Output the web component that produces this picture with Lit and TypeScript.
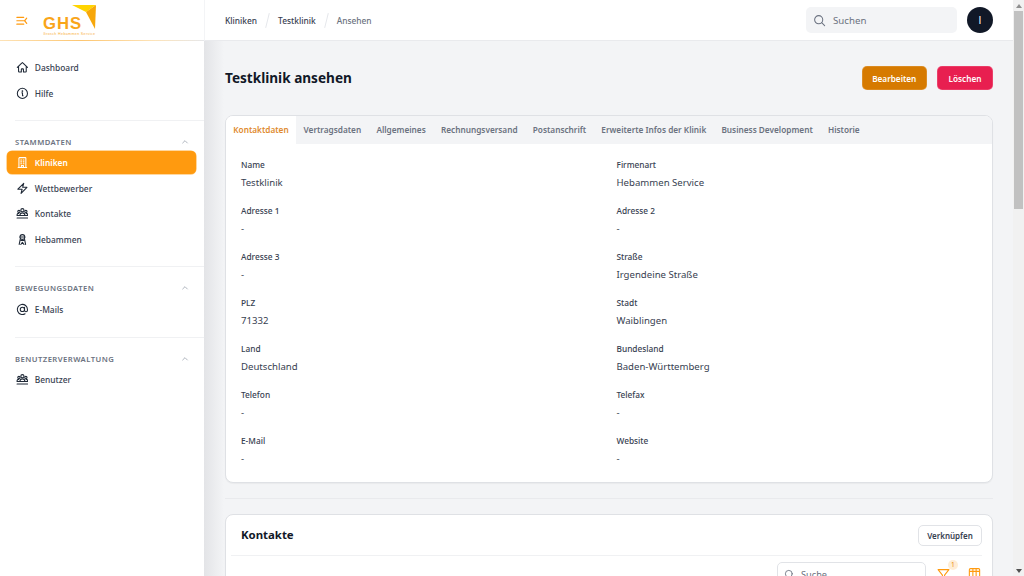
import { LitElement, html, css, svg } from "lit";
import { customElement } from "lit/decorators.js";

const ic = (p: unknown) => html`<svg class="ic" viewBox="0 0 24 24" fill="none" stroke="currentColor" stroke-width="2" stroke-linecap="round" stroke-linejoin="round">${p}</svg>`;
const icons: Record<string, unknown> = {
  home: svg`<path d="M2.5 12 11.2 3.3a1.1 1.1 0 0 1 1.6 0L21.5 12M4.8 9.8v9.9c0 .6.5 1.1 1.1 1.1h4.1v-4.9c0-.6.5-1.1 1.1-1.1h1.8c.6 0 1.1.5 1.1 1.1v4.9h4.1c.6 0 1.1-.5 1.1-1.1V9.8"/>`,
  info: svg`<circle cx="12" cy="12" r="9.5"/><path d="M11 11h1.2v5.5H13.3"/><circle cx="12" cy="7.7" r=".6" fill="currentColor"/>`,
  building: svg`<path d="M4 21.5h16M5.5 21.5V4.2c0-.7.6-1.2 1.2-1.2h10.6c.7 0 1.2.5 1.2 1.2v17.3M9 7.5h1.5M13.5 7.5H15M9 11h1.5M13.5 11H15M9 14.5h1.5M13.5 14.5H15M10 21.5v-3.5h4v3.5"/>`,
  bolt: svg`<path d="M3.5 13.5 14.5 2.5 12.5 10h8L9.5 21.5l2-8z"/>`,
  group: svg`<circle cx="12" cy="6" r="3"/><circle cx="5.5" cy="8.5" r="2.2"/><circle cx="18.5" cy="8.5" r="2.2"/><path d="M7.5 15c0-2.5 2-4 4.5-4s4.5 1.5 4.5 4v1M2 16v-1.5c0-1.5 1.3-2.5 3-2.5M22 16v-1.5c0-1.5-1.3-2.5-3-2.5M2 20.5h20M2 16h20"/>`,
  person: svg`<circle cx="12" cy="7.5" r="4.5"/><path d="M7.5 7.5h9M8 11.5 6 21.5M16 11.5l2 10M9 21.5l3-4 3 4M9.5 14h5"/>`,
  at: svg`<circle cx="12" cy="12" r="4"/><path d="M16 8v5.5a2.7 2.7 0 0 0 5.5 0V12A9.5 9.5 0 1 0 17 20.2"/>`,
};

const nav = (icon: string, label: string, active = false) => html`
  <a class="item ${active ? "active" : ""}">${ic(icons[icon])}<span>${label}</span></a>`;

const group = (title: string, items: unknown) => html`
  <div class="group">
    <div class="gh"><span>${title}</span>
      <svg class="chev" viewBox="0 0 24 24" fill="none" stroke="currentColor" stroke-width="2.4" stroke-linecap="round" stroke-linejoin="round"><path d="m5 15 7-7 7 7"/></svg>
    </div>
    <div class="items">${items}</div>
  </div>`;

const fields: [string, string][] = [
  ["Name", "Testklinik"], ["Firmenart", "Hebammen Service"],
  ["Adresse 1", "-"], ["Adresse 2", "-"],
  ["Adresse 3", "-"], ["Straße", "Irgendeine Straße"],
  ["PLZ", "71332"], ["Stadt", "Waiblingen"],
  ["Land", "Deutschland"], ["Bundesland", "Baden-Württemberg"],
  ["Telefon", "-"], ["Telefax", "-"],
  ["E-Mail", "-"], ["Website", "-"],
];
const tabs = ["Kontaktdaten", "Vertragsdaten", "Allgemeines", "Rechnungsversand", "Postanschrift", "Erweiterte Infos der Klinik", "Business Development", "Historie"];

@customElement("app-root")
export class AppRoot extends LitElement {
  static styles = css`
    :host { display: flex; width: 1024px; height: 576px; overflow: hidden; font-family: "Noto Sans", sans-serif; font-size: 8.4px; color: #374151; background: #f3f4f6; }
    * { box-sizing: border-box; }
    .ic { width: 12.8px; height: 12.8px; flex: none; }

    .sidebar { width: 204px; flex: none; background: #fff; display: flex; flex-direction: column; }
    .brand { height: 41px; flex: none; display: flex; align-items: flex-start; padding: 5px 0 0 16px; border-bottom: 1px solid transparent; border-image: linear-gradient(to right, #fde3b8 0, #fdc671 40%, #fde3b8 75%, #e5e7eb 100%) 1; }
    .burger { width: 12px; height: 9.5px; margin: 11px 0 0 0; flex: none; }
    .logo { width: 54px; height: 31px; margin: 0 0 0 15px; flex: none; }
    nav { display: flex; flex-direction: column; padding: 15px 8px 0 7px; }
    .items { display: flex; flex-direction: column; gap: 2.56px; }
    .item { height: 23.04px; display: flex; align-items: center; gap: 6.5px; padding: 0 8.5px; border-radius: 5px; font-weight: 500; color: #374151; }
    .item.active { background: #ff9a0f; color: #fff; font-weight: 600; box-shadow: 0 0 0 .5px #ffb040; }
    .item .ic { color: #1f2937; }
    .item.active .ic { color: #fff; }
    .group { display: flex; flex-direction: column; border-top: 1px solid #f0f1f3; margin: 15px -8px 0 8px; padding: 14px 8px 15.6px 0; }
    .group .items { margin-left: -8px; }
    .group:last-child { padding-bottom: 0; }
    .gh { height: 14px; display: flex; align-items: center; justify-content: space-between; padding-right: 7px; color: #6b7280; font-size: 7.68px; font-weight: 600; letter-spacing: .45px; margin-bottom: 2.5px; }
    .chev { width: 8px; height: 8px; color: #9ca3af; }
    .group + .group { margin-top: 0; }

    .main { flex: 1; min-width: 0; display: flex; flex-direction: column; }
    .top { height: 41px; flex: none; background: #fff; border-bottom: 1px solid #e9eaed; border-left: 1px solid #f3f4f6; display: flex; align-items: center; padding: 0 20px 0 20px; }
    .crumbs { display: flex; align-items: center; font-weight: 500; color: #374151; flex: 1; }
    .crumbs .sl { width: 1px; height: 15px; background: #e5e7eb; transform: rotate(14deg); margin: 0 10px; }
    .crumbs .last { color: #6b7280; }
    .search { width: 151px; height: 25.6px; background: #f3f4f6; border-radius: 5px; display: flex; align-items: center; gap: 7px; padding: 0 7px; color: #6b7280; font-size: 9.7px; }
    .search svg { width: 13px; height: 13px; color: #6b7280; flex: none; }
    .avatar { width: 26px; height: 26px; border-radius: 50%; background: #111827; color: #fff; display: flex; align-items: center; justify-content: center; margin-left: 10px; font-family: "Liberation Sans", sans-serif; font-size: 10.24px; }

    .content { flex: 1; min-height: 0; overflow: hidden; padding: 25px 20px 0 21px; background: linear-gradient(to right, #e3e4e7, #f3f4f6 20px); }
    .head { display: flex; align-items: center; height: 24px; }
    h1 { flex: 1; margin: 0 0 1px; font-size: 13.6px; font-weight: 700; color: #111827; }
    .btn { height: 24px; border-radius: 5px; display: flex; align-items: center; justify-content: center; font-size: 8.2px; font-weight: 600; color: #fff; box-shadow: inset 0 0 0 .6px rgba(255,255,255,.25); }
    .b1 { width: 65.5px; background: #d67a00; }
    .b2 { width: 56px; background: #e81f50; margin-left: 10px; }

    .card { background: #fff; border: 1px solid #dfe1e5; border-radius: 8px; overflow: hidden; box-shadow: 0 1px 1px rgba(0,0,0,.04); }
    .tabcard { margin-top: 25px; height: 368px; }
    .tabs { display: flex; height: 28px; background: #f3f4f6; padding-right: 0; }
    .tab { display: flex; align-items: center; padding: 0 7.6px 1.5px; font-size: 8.24px; font-weight: 600; color: #6b7280; }
    .tab.on { background: #fff; color: #e08a2e; width: 70px; padding: 0 0 1.5px; justify-content: center; }
    .grid { display: grid; grid-template-columns: 375.5px 1fr; row-gap: 0; padding: 12px 15px 0 15px; }
    .f { height: 46.08px; display: flex; flex-direction: column; }
    .f label { font-size: 8.3px; font-weight: 500; color: #374151; line-height: 18px; height: 17px; }
    .f div { font-size: 9.6px; color: #374151; line-height: 20px; }

    .hr { height: 1px; background: #e9eaed; margin: 15px 0; }
    .c2 { height: 100px; }
    .c2h { height: 41px; margin: 0 10px 0 5px; border-bottom: 1px solid #f0f1f3; display: flex; align-items: center; justify-content: space-between; padding-left: 10px; }
    .c2h b { font-size: 11.4px; font-weight: 700; color: #111827; margin-bottom: 1.5px; }
    .link { width: 64px; height: 21px; border: 1px solid #e1e3e7; border-radius: 5px; display: flex; align-items: center; justify-content: center; font-size: 8px; font-weight: 600; color: #374151; }
    .tools { display: flex; align-items: flex-start; justify-content: flex-end; padding: 6px 10px 0 0; gap: 0; position: relative; }
    .fs { width: 149px; height: 24px; border: 1px solid #e1e3e7; border-radius: 5px; display: flex; align-items: center; gap: 6px; padding: 0 6px; color: #6b7280; font-size: 9.2px; }
    .fs svg { width: 11px; height: 11px; color: #6b7280; flex: none; }
    .tool { width: 13px; height: 13px; color: #ff9a0f; margin-top: 6px; flex: none; }
    .t1 { margin-left: 11px; }
    .t2 { margin-left: 18px; margin-right: 1px; margin-top: 5px; }
    .badge { position: absolute; right: 34px; top: 3.5px; width: 10px; height: 10px; border-radius: 50%; background: #ffedd5; color: #ea8a10; font-size: 6.6px; display: flex; align-items: center; justify-content: center; }

    .bar { width: 11px; flex: none; background: #f1f1f1; display: flex; flex-direction: column; align-items: center; position: relative; }
    .arr { height: 11px; flex: none; display: flex; align-items: center; justify-content: center; }
    .arr svg { width: 6px; height: 4px; fill: #8f8f8f; }
    .thumb { width: 9px; height: 198px; background: #c1c1c1; flex: none; }
    .sp { flex: 1; }
    .arr.d svg { fill: #505050; }
  `;

  render() {
    const mag = html`<svg viewBox="0 0 24 24" fill="none" stroke="currentColor" stroke-width="1.9" stroke-linecap="round"><circle cx="10.5" cy="10.5" r="7.5"/><path d="m16 16 5.5 5.5"/></svg>`;
    return html`
      <aside class="sidebar">
        <div class="brand">
          <svg class="burger" viewBox="0 0 14 11" fill="none" stroke="#ff9a0f" stroke-width="1.4" stroke-linecap="round"><path d="M1 1.5h8M1 5.5h8M1 9.5h8M12.5 2.5 10 5.5l2.5 3"/></svg>
          <svg class="logo" viewBox="0 0 54 31" aria-label="GHS">
            <polygon points="29,0 53,0 43,7" fill="#ffd400"/>
            <polygon points="43,7 53,0 52,24" fill="#f7a70a"/>
            <text x="0" y="24" font-family="Liberation Sans, sans-serif" font-size="16.7" font-weight="700" letter-spacing="1" fill="#f9a51a">GHS</text>
            <text x="0" y="29.5" font-family="Liberation Sans, sans-serif" font-size="3.6" fill="#f9b040" textLength="52">Grosch Hebammen Service</text>
          </svg>
        </div>
        <nav>
          <div class="items">${nav("home", "Dashboard")}${nav("info", "Hilfe")}</div>
          ${group("STAMMDATEN", html`${nav("building", "Kliniken", true)}${nav("bolt", "Wettbewerber")}${nav("group", "Kontakte")}${nav("person", "Hebammen")}`)}
          ${group("BEWEGUNGSDATEN", nav("at", "E-Mails"))}
          ${group("BENUTZERVERWALTUNG", nav("group", "Benutzer"))}
        </nav>
      </aside>
      <div class="main">
        <header class="top">
          <div class="crumbs"><span>Kliniken</span><i class="sl"></i><span>Testklinik</span><i class="sl"></i><span class="last">Ansehen</span></div>
          <div class="search">${mag}<span>Suchen</span></div>
          <div class="avatar">I</div>
        </header>
        <div class="content">
          <div class="head"><h1>Testklinik ansehen</h1><div class="btn b1">Bearbeiten</div><div class="btn b2">Löschen</div></div>
          <section class="card tabcard">
            <div class="tabs">${tabs.map((t, i) => html`<div class="tab ${i === 0 ? "on" : ""}">${t}</div>`)}</div>
            <div class="grid">${fields.map(([l, v]) => html`<div class="f"><label>${l}</label><div>${v}</div></div>`)}</div>
          </section>
          <div class="hr"></div>
          <section class="card c2">
            <div class="c2h"><b>Kontakte</b><div class="link">Verknüpfen</div></div>
            <div class="tools">
              <div class="fs">${mag}<span>Suche</span></div>
              <svg class="tool t1" viewBox="0 0 24 24" fill="none" stroke="currentColor" stroke-width="2" stroke-linejoin="round"><path d="M2 3h20l-8 10v8l-4-2v-6z"/></svg>
              <span class="badge">1</span>
              <svg class="tool t2" viewBox="0 0 24 24" fill="none" stroke="currentColor" stroke-width="2" stroke-linejoin="round"><rect x="2.5" y="3" width="19" height="18" rx="2"/><path d="M9 3v18M15 3v18M2.5 8h19"/></svg>
            </div>
          </section>
        </div>
      </div>
      <div class="bar">
        <div class="arr"><svg viewBox="0 0 6 4"><path d="M3 0 6 4H0z"/></svg></div>
        <div class="thumb"></div>
        <div class="sp"></div>
        <div class="arr d"><svg viewBox="0 0 6 4"><path d="M0 0h6L3 4z"/></svg></div>
      </div>
    `;
  }
}
